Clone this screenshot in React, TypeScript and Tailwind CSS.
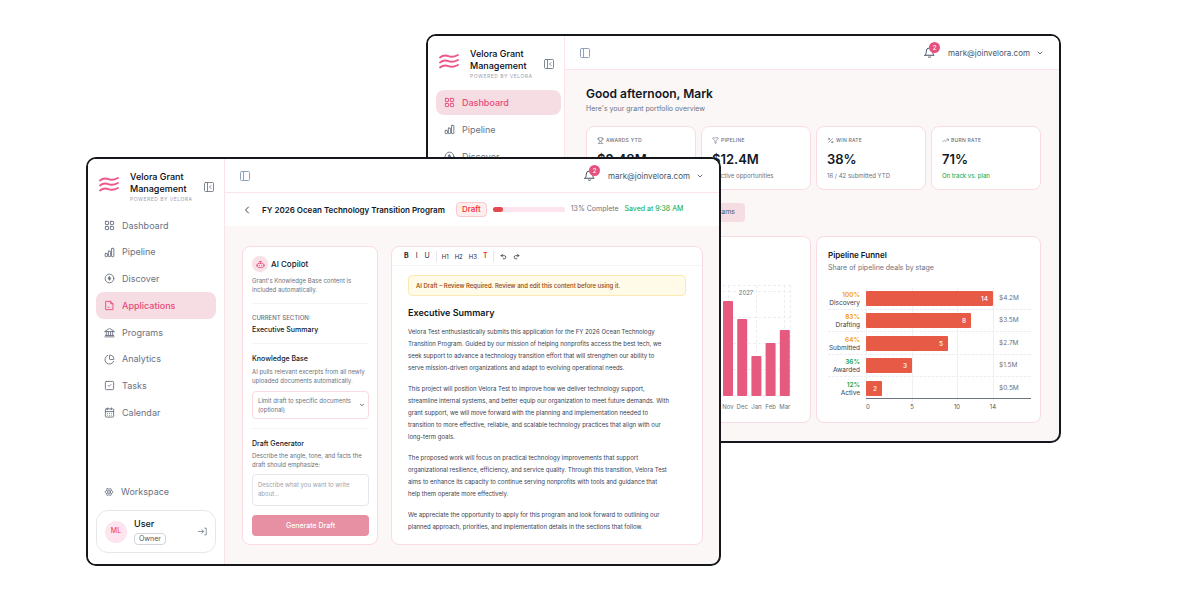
import React from 'react'
import {
  CalendarDays,
  ChartPie,
  ChevronDown,
  ChevronLeft,
  Filter,
  LayoutGrid,
  PanelLeft,
  PanelLeftClose,
  Percent,
  Redo2,
  SquareCheck,
  TrendingUp,
  Trophy,
  Undo2,
} from 'lucide-react'

type IconProps = { className?: string }

const Svg: React.FC<IconProps & { children: React.ReactNode }> = ({ className, children }) => (
  <svg
    viewBox="0 0 24 24"
    fill="none"
    stroke="currentColor"
    strokeWidth="2"
    strokeLinecap="round"
    strokeLinejoin="round"
    className={className}
    aria-hidden="true"
  >
    {children}
  </svg>
)

const BarsIcon: React.FC<IconProps> = ({ className }) => (
  <Svg className={className}>
    <rect x="2.5" y="14" width="5" height="7" rx="1" />
    <rect x="9.5" y="9" width="5" height="12" rx="1" />
    <rect x="16.5" y="3" width="5" height="18" rx="1" />
  </Svg>
)

const DiscoverIcon: React.FC<IconProps> = ({ className }) => (
  <Svg className={className}>
    <circle cx="12" cy="12" r="9.5" />
    <path d="M12 8l2.500 4-2.500 4-2.500-4z" fill="currentColor" />
  </Svg>
)

const FileIcon: React.FC<IconProps> = ({ className }) => (
  <Svg className={className}>
    <path d="M4.500 3h10l5 5v13h-15z" />
    <path d="M14.500 3v5h5M9 16h2" />
  </Svg>
)

const BankIcon: React.FC<IconProps> = ({ className }) => (
  <Svg className={className}>
    <path d="M2 9.500L12 3l10 6.500zM2 21.500h20M3 18.500h18" />
    <path d="M5 10v8M9.500 10v8M14.500 10v8M19 10v8" />
  </Svg>
)

const GearIcon: React.FC<IconProps> = ({ className }) => (
  <Svg className={className}>
    <path d="M8 3.500l4 2 4-2 2 4.500 4 4-4 4-2 4.500-4-2-4 2L6 16l-4-4 4-4z" />
    <circle cx="12" cy="12" r="3.500" />
    <path d="M6 8l3 2M18 8l-3 2M6 16l3-2M18 16l-3-2" />
  </Svg>
)

const ExitIcon: React.FC<IconProps> = ({ className }) => (
  <Svg className={className}>
    <path d="M1 12h14M10 7l5 5-5 5M18 3h4v18h-4" />
  </Svg>
)

const BellIcon: React.FC<IconProps> = ({ className }) => (
  <Svg className={className}>
    <path d="M2 18h20c-2-2-3-4-3-9a7 7 0 0 0-14 0c0 5-1 7-3 9z" />
    <path d="M9 21.500c1 1.500 5 1.500 6 0" />
  </Svg>
)

const RobotIcon: React.FC<IconProps> = ({ className }) => (
  <Svg className={className}>
    <rect x="4" y="9" width="16" height="11" rx="3" />
    <path d="M12 9V4M9 4h6M1.500 13v3M22.500 13v3M9 14v1M15 14v1" />
  </Svg>
)

const Logo: React.FC = () => (
  <svg viewBox="0 0 20 15" fill="none" stroke="#f0568a" strokeWidth="1.8" strokeLinecap="round" className="h-[15px] w-5 shrink-0" aria-hidden="true">
    <path d="M1 3.500C4 1 6 .8 9.500 2.200S15 3 19 1" />
    <path d="M1 8.500C4 6 6 5.800 9.500 7.200S15 8 19 6" />
    <path d="M1 13.500C4 11 6 10.800 9.500 12.200S15 13 19 11" />
  </svg>
)

const NAV = [
  { label: 'Dashboard', Icon: LayoutGrid },
  { label: 'Pipeline', Icon: BarsIcon },
  { label: 'Discover', Icon: DiscoverIcon },
  { label: 'Applications', Icon: FileIcon },
  { label: 'Programs', Icon: BankIcon },
  { label: 'Analytics', Icon: ChartPie },
  { label: 'Tasks', Icon: SquareCheck },
  { label: 'Calendar', Icon: CalendarDays },
]

const Sidebar: React.FC<{ active: string; items?: number; wide?: boolean; children?: React.ReactNode }> = ({
  active,
  items = 8,
  wide = false,
  children,
}) => (
  <aside className="flex w-[137px] shrink-0 flex-col border-r border-[#fbe3ea] bg-white">
    <div className="flex items-start pl-[11px] pt-3">
      <div className="pt-[6px]">
        <Logo />
      </div>
      <div className="ml-[11px] w-[73px] whitespace-nowrap">
        <div className="text-[9px] font-medium leading-[12px] text-gray-950">
          Velora Grant
          <br />
          Management
        </div>
        <div className="text-[5px] leading-[8px] tracking-widest text-gray-400">POWERED BY VELORA</div>
      </div>
      <button type="button" aria-label="Collapse sidebar" className="mt-[10px] text-gray-500">
        <PanelLeftClose className="size-3" strokeWidth={1.7} />
      </button>
    </div>
    <nav className={`mt-[9px] grid pl-2 ${wide ? 'h-[81px] pr-[3px]' : 'h-[214px] pr-2'}`}>
      {NAV.slice(0, items).map(({ label, Icon }) => (
        <a
          key={label}
          href="#"
          className={`flex items-center gap-[7px] rounded-lg px-2 text-[9px] ${wide ? 'my-px' : ''} ${
            label === active ? 'bg-[#f6dde3] font-medium text-[#e64a78]' : 'text-gray-500'
          }`}
        >
          <Icon className="size-[11px]" />
          {label}
        </a>
      ))}
    </nav>
    {children}
  </aside>
)

const TopBar: React.FC = () => (
  <div className="flex h-[34px] shrink-0 items-center border-b border-[#fbe3ea] bg-white pl-[14px] pr-[15px]">
    <button type="button" aria-label="Toggle panel" className="text-slate-400">
      <PanelLeft className="size-3" />
    </button>
    <button type="button" aria-label="Notifications" className="relative ml-auto text-gray-700">
      <BellIcon className="size-[11px]" />
      <span className="absolute -right-[5px] -top-[5px] flex size-[11px] items-center justify-center rounded-full bg-[#e6527d] text-[6px] font-medium text-white">
        2
      </span>
    </button>
    <button type="button" className="ml-[13px] flex items-center gap-[6px] text-[8px] text-gray-600">
      mark@joinvelora.com
      <ChevronDown className="size-2" strokeWidth={2.5} />
    </button>
  </div>
)

const STATS = [
  { label: 'AWARDS YTD', value: '$2.48M', note: '6 awards this year', Icon: Trophy, good: false },
  { label: 'PIPELINE', value: '$12.4M', note: '8 active opportunities', Icon: Filter, good: false },
  { label: 'WIN RATE', value: '38%', note: '16 / 42 submitted YTD', Icon: Percent, good: false },
  { label: 'BURN RATE', value: '71%', note: 'On track vs. plan', Icon: TrendingUp, good: true },
]

const MONTHS = [
  { name: 'Nov', height: 95 },
  { name: 'Dec', height: 77 },
  { name: 'Jan', height: 40 },
  { name: 'Feb', height: 53 },
  { name: 'Mar', height: 66 },
]

const STAGES = [
  { name: 'Discovery', percent: '100%', color: '#f59e0b', y: 6, width: 127, count: 14, amount: '$4.2M' },
  { name: 'Drafting', percent: '83%', color: '#f59e0b', y: 28, width: 105, count: 8, amount: '$3.5M' },
  { name: 'Submitted', percent: '64%', color: '#f59e0b', y: 51, width: 82, count: 5, amount: '$2.7M' },
  { name: 'Awarded', percent: '36%', color: '#16a34a', y: 73, width: 46, count: 3, amount: '$1.5M' },
  { name: 'Active', percent: '12%', color: '#16a34a', y: 96, width: 16, count: 2, amount: '$0.5M' },
]

const MonthChart: React.FC = () => (
  <svg viewBox="0 0 193 127" className="w-full" role="img" aria-label="Awards by month">
    <g stroke="#eceef1" strokeDasharray="3 2">
      {[0.5, 6.5, 32.5, 58.5, 84.5, 110.5].map((y) => (
        <path key={y} d={`M0 ${y}H193`} />
      ))}
      {[130.5, 158.5, 186.5, 192.5].map((x) => (
        <path key={x} d={`M${x} 0V111`} />
      ))}
    </g>
    <text x="148" y="10" textAnchor="middle" fontSize="6" fill="#6b7280">
      2027
    </text>
    {MONTHS.map((m, i) => (
      <g key={m.name}>
        <rect x={125 + i * 14.2} y={111 - m.height} width="10" height={m.height} rx="1" fill="#e65a80" />
        <text x={130 + i * 14.2} y="124" textAnchor="middle" fontSize="6" fill="#6b7280">
          {m.name}
        </text>
      </g>
    ))}
  </svg>
)

const FunnelChart: React.FC = () => (
  <svg viewBox="0 0 203 127" className="w-full" role="img" aria-label="Pipeline funnel">
    <g stroke="#eceef1" strokeDasharray="3 1">
      {[24.5, 46.5, 69.5, 91.5].map((y) => (
        <path key={y} d={`M0 ${y}H203`} />
      ))}
    </g>
    <g stroke="#eff0f3">
      {[38.5, 84.5, 129.5, 165.5].map((x) => (
        <path key={x} d={`M${x} 3V117`} />
      ))}
    </g>
    {STAGES.map((s) => (
      <g key={s.name} fontSize="6.5">
        <text x="32" y={s.y + 6} textAnchor="end" fill={s.color} fontWeight="600">
          {s.percent}
        </text>
        <text x="32" y={s.y + 14} textAnchor="end" fill="#374151">
          {s.name}
        </text>
        <rect x="38" y={s.y} width={s.width} height="15" rx="1" fill="#e75a46" />
        <text x={38 + s.width - 5} y={s.y + 10} textAnchor="end" fill="#fff" fontWeight="500">
          {s.count}
        </text>
        <text x="171" y={s.y + 9} fill="#6b7280">
          {s.amount}
        </text>
      </g>
    ))}
    <path d="M38 113.500H203" stroke="#6f7580" />
    <g fontSize="6" fill="#4b5563" textAnchor="middle">
      <text x="40" y="124">0</text>
      <text x="84" y="124">5</text>
      <text x="129" y="124">10</text>
      <text x="165" y="124">14</text>
    </g>
  </svg>
)

const WINDOW = 'row-start-1 flex min-w-0 self-start overflow-hidden rounded-[10px] border-2 border-[#15171c] bg-[#fbf7f6]'
const CARD = 'rounded-lg border border-[#fadbe2] bg-white'

const DashboardWindow: React.FC = () => (
  <section className={`${WINDOW} col-start-2 col-end-4 mt-[34px]`}>
    <Sidebar active="Dashboard" items={3} wide />
    <div className="flex min-w-0 flex-1 flex-col">
      <TopBar />
      <main className="pb-[18px] pl-[21px] pr-[18px] pt-4">
        <h1 className="text-[12px] font-semibold leading-[16px] text-gray-900">Good afternoon, Mark</h1>
        <p className="mt-[2px] text-[7px] leading-[10px] text-gray-500">Here's your grant portfolio overview</p>
        <div className="mt-3 grid grid-cols-4 gap-[5px]">
          {STATS.map(({ label, value, note, Icon, good }) => (
            <div key={label} className={`${CARD} h-16 whitespace-nowrap px-[10px] pt-[9px]`}>
              <div className="flex items-center gap-[2px] text-[5px] font-medium leading-[8px] tracking-wider text-gray-500">
                <Icon className="size-[7px]" />
                {label}
              </div>
              <div className="mt-[6px] text-[13px] font-semibold leading-[18px] text-gray-900">{value}</div>
              <div className={`mt-[3px] text-[6px] leading-[10px] ${good ? 'text-green-600' : 'text-gray-500'}`}>{note}</div>
            </div>
          ))}
        </div>
        <div className="mt-[13px] flex h-[19px] w-[159px] justify-end">
          <button type="button" className="rounded bg-[#f6dde3] px-[10px] text-[7px] text-gray-600">
            Programs
          </button>
        </div>
        <div className="mt-[14px] grid grid-cols-2 gap-[5px]">
          <div className={`${CARD} pb-[10px] pl-[11px] pr-[19px] pt-3`}>
            <h2 className="text-[8px] font-semibold leading-[12px] text-gray-900">Awards Over Time</h2>
            <p className="mt-[2px] text-[7px] leading-[10px] text-gray-500">Monthly awards across all programs</p>
            <div className="mt-3">
              <MonthChart />
            </div>
          </div>
          <div className={`${CARD} pb-[10px] pl-[11px] pr-[9px] pt-3`}>
            <h2 className="text-[8px] font-semibold leading-[12px] text-gray-900">Pipeline Funnel</h2>
            <p className="mt-[2px] text-[7px] leading-[10px] text-gray-500">Share of pipeline deals by stage</p>
            <div className="mt-3">
              <FunnelChart />
            </div>
          </div>
        </div>
      </main>
    </div>
  </section>
)

const PARAGRAPHS = [
  `Velora Test enthusiastically submits this application for the FY 2026 Ocean Technology
Transition Program. Guided by our mission of helping nonprofits access the best tech, we
seek support to advance a technology transition effort that will strengthen our ability to
serve mission-driven organizations and adapt to evolving operational needs.`,
  `This project will position Velora Test to improve how we deliver technology support,
streamline internal systems, and better equip our organization to meet future demands. With
grant support, we will move forward with the planning and implementation needed to
transition to more effective, reliable, and scalable technology practices that align with our
long-term goals.`,
  `The proposed work will focus on practical technology improvements that support
organizational resilience, efficiency, and service quality. Through this transition, Velora Test
aims to enhance its capacity to continue serving nonprofits with tools and guidance that
help them operate more effectively.`,
  `We appreciate the opportunity to apply for this program and look forward to outlining our
planned approach, priorities, and implementation details in the sections that follow.`,
]

const Copilot: React.FC = () => (
  <div className={`${CARD} w-[136px] shrink-0 whitespace-nowrap pb-2 pl-[9px] pr-2 pt-[9px] text-[6px] leading-[9px] text-gray-500`}>
    <div className="flex items-center gap-[3px]">
      <span className="flex size-4 items-center justify-center rounded-full bg-[#f9dfe6] text-[#e64a78]">
        <RobotIcon className="size-[9px]" />
      </span>
      <h2 className="text-[8px] font-medium text-gray-900">AI Copilot</h2>
    </div>
    <p className="mt-1">
      Grant's Knowledge Base content is
      <br />
      included automatically.
    </p>
    <div className="mt-[9px] border-t border-gray-100 pt-[9px]">
      <div className="text-[6px] font-medium">CURRENT SECTION:</div>
      <div className="mt-[3px] text-[7px] font-medium text-gray-900">Executive Summary</div>
    </div>
    <div className="mt-[9px] border-t border-gray-100 pt-[10px]">
      <label htmlFor="documents" className="block text-[7px] font-medium text-gray-900">
        Knowledge Base
      </label>
      <p className="mt-1">
        AI pulls relevant excerpts from all newly
        <br />
        uploaded documents automatically.
      </p>
      <div className="relative mt-[6px]">
        <select
          id="documents"
          className="block h-7 w-full appearance-none whitespace-pre-wrap rounded border border-[#fadbe2] bg-white py-1 pl-[5px] pr-3 text-[6px] leading-[9px] text-gray-500"
        >
          <option>Limit draft to specific documents (optional)</option>
        </select>
        <ChevronDown className="pointer-events-none absolute right-1 top-[11px] size-[6px] text-gray-700" strokeWidth={3} />
      </div>
    </div>
    <div className="mt-[9px] border-t border-gray-100 pt-[10px]">
      <label htmlFor="prompt" className="block text-[7px] font-medium text-gray-900">
        Draft Generator
      </label>
      <p className="mt-[3px]">
        Describe the angle, tone, and facts the
        <br />
        draft should emphasize:
      </p>
      <textarea
        id="prompt"
        placeholder={'Describe what you want to write\nabout...'}
        className="mt-[5px] block h-[32px] w-full resize-none rounded border border-gray-200 px-[5px] py-[5px] text-[6px] leading-[9px] placeholder:text-gray-400"
      />
      <button type="button" className="mt-[9px] h-[21px] w-full rounded bg-[#e78fa3] text-[7px] font-medium text-white">
        Generate Draft
      </button>
    </div>
  </div>
)

const Editor: React.FC = () => (
  <div className={`${CARD} min-w-0 flex-1`}>
    <div className="flex h-[19px] items-center border-b border-gray-100 pl-3 pt-px text-[6px] text-gray-800">
      <div className="flex gap-[7px] border-r border-gray-200 pr-[6px] text-[7px]">
        <button type="button" className="font-bold">B</button>
        <button type="button">I</button>
        <button type="button">U</button>
      </div>
      <div className="flex items-center gap-[6px] border-r border-gray-200 px-[5px]">
        <button type="button">H1</button>
        <button type="button">H2</button>
        <button type="button">H3</button>
        <button type="button" className="text-[7px] font-semibold text-red-500">T</button>
      </div>
      <div className="flex gap-[6px] pl-[6px]">
        <button type="button" aria-label="Undo">
          <Undo2 className="size-[7px]" strokeWidth={2.5} />
        </button>
        <button type="button" aria-label="Redo">
          <Redo2 className="size-[7px]" strokeWidth={2.5} />
        </button>
      </div>
    </div>
    <div className="px-4 pb-[9px] pt-[9px]">
      <div className="flex h-[21px] items-center rounded border border-[#fbe9b0] bg-[#fffbe8] px-[7px] text-[6px] font-medium text-amber-800">
        AI Draft – Review Required. Review and edit this content before using it.
      </div>
      <h2 className="mb-[6px] mt-[10px] text-[9px] font-semibold leading-[14px] text-gray-900">Executive Summary</h2>
      <div className="flex flex-col gap-[9px]">
        {PARAGRAPHS.map((text) => (
          <p key={text} className="whitespace-pre text-[6px] leading-[12px] text-gray-700">
            {text}
          </p>
        ))}
      </div>
    </div>
  </div>
)

const ApplicationWindow: React.FC = () => (
  <section className={`${WINDOW} col-start-1 col-end-3 mt-[157px]`}>
    <Sidebar active="Applications">
      <div className="mt-auto px-2 pb-[11px]">
        <a href="#" className="flex items-center gap-[7px] px-2 text-[9px] leading-[14px] text-gray-500">
          <GearIcon className="size-[10px]" />
          Workspace
        </a>
        <div className="mt-[11px] flex h-[43px] items-center rounded-xl border border-gray-200 px-2">
          <span className="flex size-[22px] items-center justify-center rounded-full bg-[#fde4ef] text-[7px] text-red-500">ML</span>
          <div className="ml-[7px]">
            <div className="text-[9px] font-medium leading-[12px] text-gray-900">User</div>
            <div className="mt-[3px] rounded-sm border border-gray-300 px-1 text-[7px] leading-[10px] text-gray-600">Owner</div>
          </div>
          <button type="button" aria-label="Sign out" className="ml-auto text-gray-500">
            <ExitIcon className="size-[9px]" />
          </button>
        </div>
      </div>
    </Sidebar>
    <div className="flex min-w-0 flex-1 flex-col">
      <TopBar />
      <header className="flex h-[33px] items-center whitespace-nowrap bg-white pl-4 text-[7px]">
        <button type="button" aria-label="Back" className="text-gray-700">
          <ChevronLeft className="size-3" />
        </button>
        <h1 className="ml-[9px] text-[8px] font-semibold text-gray-900">FY 2026 Ocean Technology Transition Program</h1>
        <span className="ml-[11px] rounded border border-[#f9c9cc] bg-[#fdeeee] px-[5px] text-[8px] font-medium leading-[13px] text-red-500">
          Draft
        </span>
        <div className="ml-[6px] h-[5px] w-[72px] rounded-full bg-[#fce4ee]">
          <div className="h-full w-[10px] rounded-full bg-[#e5484d]" />
        </div>
        <span className="ml-[6px] text-gray-500">13% Complete</span>
        <span className="ml-[6px] text-green-600">Saved at 9:38 AM</span>
      </header>
      <main className="flex flex-1 gap-[13px] pb-[19px] pl-[17px] pr-4 pt-5">
        <Copilot />
        <Editor />
      </main>
    </div>
  </section>
)

const App: React.FC = () => (
  <div className="grid min-h-screen grid-cols-[340fr_295fr_340fr] bg-white pl-[86px] pr-[139px] font-['Inter','Liberation_Sans',sans-serif]">
    <DashboardWindow />
    <ApplicationWindow />
  </div>
)

export default App
